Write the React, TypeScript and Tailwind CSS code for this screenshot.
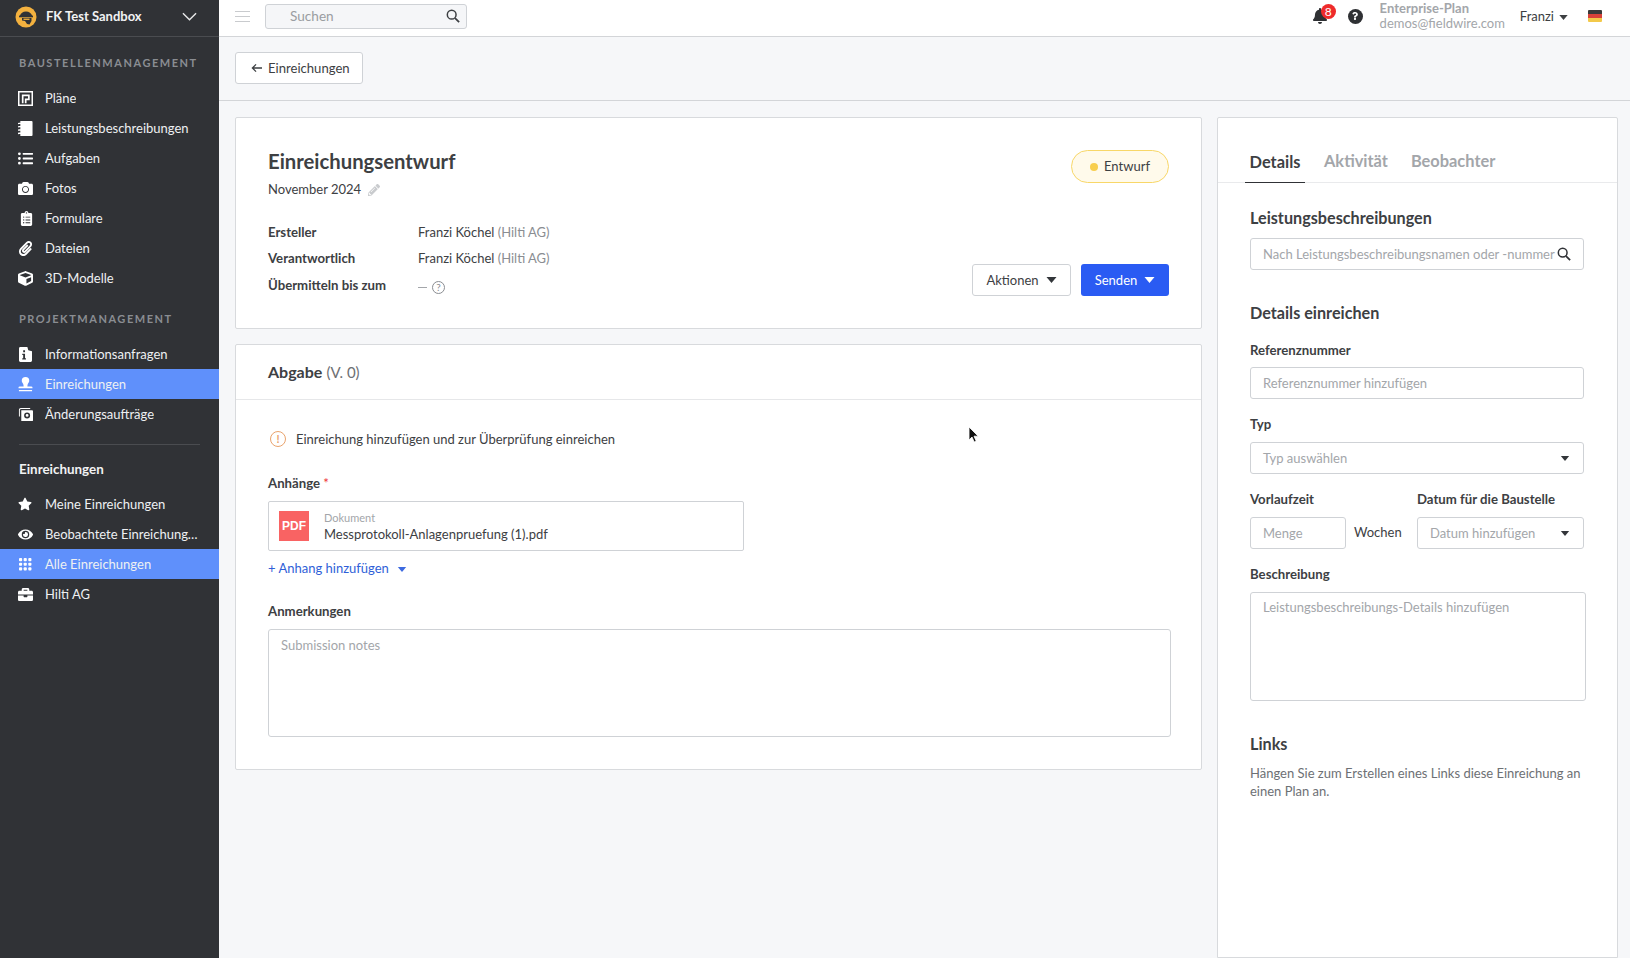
import React from "react";
import { FaListUl, FaCamera, FaPaperclip, FaStar, FaEye, FaBriefcase, FaClipboardList, FaPencilAlt, FaQuestion, FaBell, FaCube } from "react-icons/fa";

const Plan = () => (
  <svg viewBox="0 0 16 16" className="w-[15px] h-[15px]" fill="none" stroke="currentColor">
    <rect x="0.800" y="0.800" width="14.400" height="14.400" strokeWidth="1.600" />
    <path d="M5 13V4.600h6.600V9H8.200v4" strokeWidth="1.800" />
  </svg>
);
const Notebook = () => (
  <svg viewBox="0 0 16 16" className="w-[15px] h-[15px]"><path fill="currentColor" d="M2.500 0h12a1 1 0 0 1 1 1v14a1 1 0 0 1-1 1h-12zM0 2l2.500-.5v1.500L0 3.500zM0 5.500L2.500 5v1.500L0 7zM0 9l2.500-.5V10L0 10.500zM0 12.500l2.500-.5v1.500L0 14z" /></svg>
);
const InfoDoc = () => (
  <svg viewBox="0 0 14 16" className="w-[13px] h-[15px]"><path fillRule="evenodd" fill="currentColor" d="M1.500 0H9l1 3.500 4 1v10A1.500 1.500 0 0 1 12.500 16h-11A1.500 1.500 0 0 1 0 14.500v-13A1.500 1.500 0 0 1 1.500 0zM4.500 3.500v2h2v-2zM3.500 7.200v1.300h1V12h-1v1.300h4V12h-1V7.200z" /></svg>
);
const Stamp = () => (
  <svg viewBox="0 0 16 16" className="w-[15px] h-[15px]"><path fill="currentColor" d="M8 0a4 4 0 0 1 4 4c0 1.800-1.500 2.800-1.800 4.200L10 10h4a1.500 1.500 0 0 1 1.500 1.500V12H.5v-.5A1.500 1.500 0 0 1 2 10h4l-.2-1.800C5.500 6.800 4 5.800 4 4a4 4 0 0 1 4-4zM1 13.800h14V15.200H1z" /></svg>
);
const Changes = () => (
  <svg viewBox="0 0 16 16" className="w-[15px] h-[15px]"><path fillRule="evenodd" fill="currentColor" d="M3 1h10v1H3.500A1.500 1.500 0 0 0 2 3.500V10H1V3a2 2 0 0 1 2-2zM3.500 3.500H15a1 1 0 0 1 1 1V14a1 1 0 0 1-1 1H3.500zM9.700 5.800a3.200 3.200 0 1 0 0 6.400 3.200 3.200 0 0 0 0-6.400zm0 1.700a1.500 1.500 0 1 1 0 3 1.500 1.500 0 0 1 0-3z" /></svg>
);
const Grid = () => (
  <svg viewBox="0 0 14 14" className="w-[13px] h-[13px]" fill="currentColor">
    {[0, 5, 10].flatMap((y) => [0, 5, 10].map((x) => <rect key={`${x}-${y}`} x={x} y={y} width="3.400" height="3.400" rx="1" />))}
  </svg>
);
const Caret = ({ className }: { className: string }) => (
  <svg viewBox="0 0 10 6" className={className}><path d="M0 0h10L5 6z" fill="currentColor" /></svg>
);
const Search = ({ className }: { className: string }) => (
  <svg viewBox="0 0 16 16" className={className} fill="none" stroke="currentColor"><circle cx="6.500" cy="6.500" r="5" strokeWidth="1.700" /><path d="M10.300 10.300l4.700 4.700" strokeWidth="2" /></svg>
);
const Logo = () => (
  <svg viewBox="0 0 22 22" className="w-[22px] h-[22px] shrink-0">
    <circle cx="11" cy="11" r="10.500" fill="#f3b13f" />
    <path d="M4.800 10a6.500 6.500 0 0 1 12.400 0z" fill="#303236" />
    <rect x="4" y="9.600" width="14" height="1.700" fill="#303236" />
    <path d="M7 12h9.500v3l-2 3.500-2.500-.5-2-3-3-.5z" fill="#303236" />
    <rect x="8.500" y="12.600" width="6" height="1.300" fill="#f3b13f" />
  </svg>
);

const icon = "text-[15px]";
const Item = ({ ic, label, active }: { ic: React.ReactNode; label: string; active?: boolean }) => (
  <div className={`h-[30px] flex items-center pl-[18px] pr-[21px] ${active ? "bg-[#5f90fb]" : ""}`}>
    <span className="w-[27px] shrink-0 flex items-center text-white">{ic}</span>
    <span className="truncate pt-[2px] text-[13px] text-[#eef0f2]">{label}</span>
  </div>
);
const SectionHead = ({ children, className }: { children: string; className: string }) => (
  <div className={`h-[18px] pl-[19px] text-[11px] leading-[18px] font-bold tracking-[0.14em] text-[#8a8d92] ${className}`}>{children}</div>
);
const Label = ({ children, className = "" }: { children: React.ReactNode; className?: string }) => (
  <div className={`text-[13.200px] leading-[18px] font-bold text-[#3d4043] ${className}`}>{children}</div>
);
const field = "border border-[#cfd2d6] rounded-[3px] bg-white text-[13px] text-[#3d4043] placeholder:text-[#a3a6aa] outline-none px-[12px]";
const Select = ({ text, className }: { text: string; className: string }) => (
  <div className={`border border-[#cfd2d6] rounded-[3px] bg-white flex items-center justify-between pl-[12px] pr-[13px] text-[13px] text-[#a3a6aa] ${className}`}>
    <span className="pt-[2px]">{text}</span>
    <Caret className="w-[10px] h-[5px] text-[#33363a]" />
  </div>
);

export default function App() {
  return (
    <div className="relative flex h-screen w-full overflow-hidden bg-[#f6f7f9] text-[#3d4043] [font-family:Lato,sans-serif]">
      <aside className="w-[219px] shrink-0 bg-[#303236] flex flex-col">
        <div className="h-[37px] border-b border-[#4a4c50] flex items-center pl-[15px] pr-[22px] pb-[3px]">
          <Logo />
          <span className="ml-[9px] text-[13px] font-bold text-[#f2f3f4] flex-1">FK Test Sandbox</span>
          <svg viewBox="0 0 16 9" className="w-[15px] h-[9px]" fill="none" stroke="#e8e9ea" strokeWidth="1.500"><path d="M1 1l7 7 7-7" /></svg>
        </div>
        <SectionHead className="mt-[17px]">BAUSTELLENMANAGEMENT</SectionHead>
        <div className="mt-[11px]">
          <Item ic={<Plan />} label="Pläne" />
          <Item ic={<Notebook />} label="Leistungsbeschreibungen" />
          <Item ic={<FaListUl className={icon} />} label="Aufgaben" />
          <Item ic={<FaCamera className={icon} />} label="Fotos" />
          <Item ic={<FaClipboardList className="text-[15px] ml-[1px]" />} label="Formulare" />
          <Item ic={<FaPaperclip className={icon} />} label="Dateien" />
          <Item ic={<FaCube className={icon} />} label="3D-Modelle" />
        </div>
        <SectionHead className="mt-[17px]">PROJEKTMANAGEMENT</SectionHead>
        <div className="mt-[11px]">
          <Item ic={<span className="ml-[1px] flex"><InfoDoc /></span>} label="Informationsanfragen" />
          <Item ic={<Stamp />} label="Einreichungen" active />
          <Item ic={<Changes />} label="Änderungsaufträge" />
        </div>
        <div className="mt-[15px] mx-[19px] h-px bg-[#4a4c50]" />
        <div className="mt-[15px] h-[18px] pl-[19px] text-[13.400px] leading-[18px] font-bold text-[#f2f3f4]">Einreichungen</div>
        <div className="mt-[11px]">
          <Item ic={<FaStar className="text-[14px]" />} label="Meine Einreichungen" />
          <Item ic={<FaEye className={icon} />} label="Beobachtete Einreichungen" />
          <Item ic={<span className="ml-[1px] flex"><Grid /></span>} label="Alle Einreichungen" active />
          <Item ic={<FaBriefcase className={icon} />} label="Hilti AG" />
        </div>
      </aside>

      <main className="flex-1 min-w-0 flex flex-col">
        <header className="h-[37px] shrink-0 bg-white border-b border-[#d3d5d8] flex items-center pl-[16px] pr-[28px] pb-[4px]">
          <div className="w-[15px] flex flex-col gap-[4px] mt-[1px]">
            <div className="h-px bg-[#c9cbce]" /><div className="h-px bg-[#c9cbce]" /><div className="h-px bg-[#c9cbce]" />
          </div>
          <div className="ml-[15px] w-[202px] h-[25px] border border-[#cfd2d6] rounded-[3px] bg-[#f5f6f8] flex items-center justify-between pl-[24px] pr-[6px]">
            <span className="text-[13.600px] text-[#9a9da1]">Suchen</span>
            <Search className="w-[14px] h-[14px] text-[#3d4043]" />
          </div>
          <div className="flex-1" />
          <div className="relative w-[16px] h-[18px] flex items-center">
            <FaBell className="text-[16px] text-[#2f3134]" />
            <span className="absolute -top-[3px] left-[9px] w-[15px] h-[15px] rounded-full bg-[#ee2b2b] text-white text-[12px] leading-[15px] text-center">8</span>
          </div>
          <div className="ml-[20px] w-[15px] h-[15px] rounded-full bg-[#2f3134] flex items-center justify-center">
            <FaQuestion className="text-[8px] text-white" />
          </div>
          <div className="ml-[17px] text-[13px] leading-[15px] text-[#a3a6aa]">
            <div className="font-bold">Enterprise-Plan</div>
            <div>demos@fieldwire.com</div>
          </div>
          <span className="ml-[15px] pt-[2px] text-[13px] text-[#3d4043]">Franzi</span>
          <Caret className="ml-[5px] w-[9px] h-[5px] mt-[2px] text-[#3d4043]" />
          <div className="ml-[20px] w-[14px] h-[12px] rounded-[1px] overflow-hidden flex flex-col">
            <div className="h-[4px] bg-[#3a3a3a]" /><div className="h-[4px] bg-[#d8423a]" /><div className="h-[4px] bg-[#f3c94a]" />
          </div>
        </header>

        <div className="h-[64px] shrink-0 border-b border-[#d3d5d8] pt-[15px] pl-[16px]">
          <div className="w-[128px] h-[32px] bg-white border border-[#cfd2d6] rounded-[3px] flex items-center pl-[15px]">
            <svg viewBox="0 0 12 10" className="w-[11px] h-[10px]" fill="none" stroke="#3d4043" strokeWidth="1.400"><path d="M12 5H1.500M5.500 1L1.500 5l4 4" /></svg>
            <span className="ml-[6px] pt-[2px] text-[13.100px]">Einreichungen</span>
          </div>
        </div>

        <div className="flex-1 min-h-0 flex gap-[15px] pt-[16px] pl-[16px] pr-[14px]">
          <div className="w-[967px] shrink-0 flex flex-col gap-[15px]">
            <section className="relative h-[212px] bg-white border border-[#d8dadd] rounded-[2px] pl-[32px] pt-[30px]">
              <h1 className="text-[20.300px] leading-[26px] font-bold text-[#3d4043]">Einreichungsentwurf</h1>
              <div className="mt-[7px] h-[18px] flex items-center text-[13px]">
                November 2024
                <FaPencilAlt className="ml-[7px] text-[12px] text-[#c9cbce]" />
              </div>
              <div className="mt-[20px] grid grid-cols-[150px_1fr] auto-rows-[26px] items-center text-[13px]">
                <Label>Ersteller</Label>
                <div className="pt-[2px]">Franzi Köchel <span className="text-[#8a8d92]">(Hilti AG)</span></div>
                <Label>Verantwortlich</Label>
                <div className="pt-[2px]">Franzi Köchel <span className="text-[#8a8d92]">(Hilti AG)</span></div>
                <Label className="mt-[1px]">Übermitteln bis zum</Label>
                <div className="flex items-center text-[#a3a6aa] mt-[6px]">
                  <span className="w-[9px] h-px bg-[#a3a6aa]" />
                  <span className="ml-[5px] w-[13px] h-[13px] rounded-full border border-[#8a8d92] text-[#8a8d92] text-[10px] leading-[11px] text-center">?</span>
                </div>
              </div>
              <div className="absolute right-[32px] top-[32px] w-[98px] h-[33px] rounded-full bg-[#fffaeb] border border-[#f8d768] flex items-center justify-center text-[13px]">
                <span className="w-[8px] h-[8px] rounded-full bg-[#f8ce4e] mr-[6px]" />Entwurf
              </div>
              <div className="absolute right-[32px] top-[146px] flex gap-[10px]">
                <div className="w-[99px] h-[32px] border border-[#cfd2d6] rounded-[3px] flex items-center justify-center text-[13px] bg-white">
                  <span className="pt-[2px]">Aktionen</span><Caret className="ml-[7px] w-[11px] h-[6px] text-[#33363a]" />
                </div>
                <div className="w-[88px] h-[32px] rounded-[3px] bg-[#2a5bf3] text-white flex items-center justify-center text-[13px]">
                  <span className="pt-[2px]">Senden</span><Caret className="ml-[7px] w-[11px] h-[6px] text-white" />
                </div>
              </div>
            </section>

            <section className="h-[426px] bg-white border border-[#d8dadd] rounded-[2px]">
              <div className="h-[55px] border-b border-[#e6e7e9] pl-[32px] flex items-center">
                <span className="text-[16px] font-bold">Abgabe</span>
                <span className="ml-[4px] text-[15px] text-[#6d7074]">(V. 0)</span>
              </div>
              <div className="pl-[32px] pr-[30px]">
                <div className="mt-[29px] h-[20px] flex items-center text-[13px]">
                  <span className="ml-[2px] w-[16px] h-[16px] rounded-full border-[1.500px] border-[#e9a36d] text-[#e9a36d] text-[11px] font-bold leading-[13px] text-center">!</span>
                  <span className="ml-[10px] pt-[2px]">Einreichung hinzufügen und zur Überprüfung einreichen</span>
                </div>
                <Label className="mt-[25px]">Anhänge <span className="text-[#e33] font-normal">*</span></Label>
                <div className="mt-[9px] w-[476px] h-[50px] border border-[#cfd2d6] rounded-[2px] flex items-center pl-[10px]">
                  <div className="w-[30px] h-[30px] bg-[#f96363] text-white text-[12px] font-bold flex items-center justify-center [font-family:'Liberation_Sans',sans-serif]">PDF</div>
                  <div className="ml-[15px]">
                    <div className="text-[11px] leading-[15px] text-[#a3a6aa]">Dokument</div>
                    <div className="text-[13px] leading-[18px]">Messprotokoll-Anlagenpruefung (1).pdf</div>
                  </div>
                </div>
                <div className="mt-[9px] h-[18px] flex items-center text-[13px] text-[#2f5fd8]">
                  + Anhang hinzufügen<Caret className="ml-[8px] w-[10px] h-[5px] text-[#3d6ae0]" />
                </div>
                <Label className="mt-[24px]">Anmerkungen</Label>
                <textarea readOnly placeholder="Submission notes" className={`${field} block mt-[9px] w-[903px] h-[108px] pt-[6px] resize-none`} />
              </div>
            </section>
          </div>

          <aside className="flex-1 bg-white border border-[#d8dadd] rounded-t-[2px]">
            <div className="h-[65px] border-b border-[#e9eaec] flex items-end pl-[27px] gap-[19px]">
              <div className="w-[60px] h-[44px] border-b-[1.500px] border-[#303236] -mb-px text-center text-[16.400px] leading-[45px] font-bold text-[#3d4043]">Details</div>
              <div className="h-[44px] text-[16.400px] leading-[45px] font-bold text-[#a3a6aa]">Aktivität</div>
              <div className="h-[44px] ml-[4px] text-[16.400px] leading-[45px] font-bold text-[#a3a6aa]">Beobachter</div>
            </div>
            <div className="pl-[32px] pr-[31px]">
              <div className="mt-[24px] text-[16.200px] leading-[22px] font-bold">Leistungsbeschreibungen</div>
              <div className="mt-[9px] h-[32px] w-[334px] border border-[#cfd2d6] rounded-[3px] flex items-center justify-between pl-[12px] pr-[12px]">
                <span className="pt-[2px] text-[13px] text-[#a3a6aa] whitespace-nowrap">Nach Leistungsbeschreibungsnamen oder -nummer</span>
                <Search className="w-[14px] h-[14px] text-[#303236] shrink-0" />
              </div>
              <div className="mt-[32px] text-[16.200px] leading-[22px] font-bold">Details einreichen</div>
              <Label className="mt-[17px]">Referenznummer</Label>
              <input readOnly placeholder="Referenznummer hinzufügen" className={`${field} block mt-[8px] w-[334px] h-[32px]`} />
              <Label className="mt-[16px]">Typ</Label>
              <Select text="Typ auswählen" className="mt-[9px] w-[334px] h-[32px]" />
              <div className="mt-[16px] flex">
                <div className="w-[167px]">
                  <Label>Vorlaufzeit</Label>
                  <div className="mt-[9px] flex items-center">
                    <input readOnly placeholder="Menge" className={`${field} w-[96px] h-[32px]`} />
                    <span className="ml-[8px] text-[13px]">Wochen</span>
                  </div>
                </div>
                <div>
                  <Label>Datum für die Baustelle</Label>
                  <Select text="Datum hinzufügen" className="mt-[9px] w-[167px] h-[32px]" />
                </div>
              </div>
              <Label className="mt-[16px]">Beschreibung</Label>
              <textarea readOnly placeholder="Leistungsbeschreibungs-Details hinzufügen" className={`${field} block mt-[9px] w-[336px] h-[109px] pt-[5px] resize-none`} />
              <div className="mt-[32px] text-[16.200px] leading-[22px] font-bold">Links</div>
              <p className="mt-[9px] w-[334px] text-[13px] leading-[18px] text-[#6d7074]">Hängen Sie zum Erstellen eines Links diese Einreichung an einen Plan an.</p>
            </div>
          </aside>
        </div>
      </main>

      <svg viewBox="0 0 12 18" className="absolute left-[968px] top-[426px] w-[12px] h-[18px]">
        <path d="M1 1v13l3-3 2.200 5 2-1-2.200-4.800h4.200z" fill="#111" stroke="#fff" strokeWidth="0.800" />
      </svg>
    </div>
  );
}
